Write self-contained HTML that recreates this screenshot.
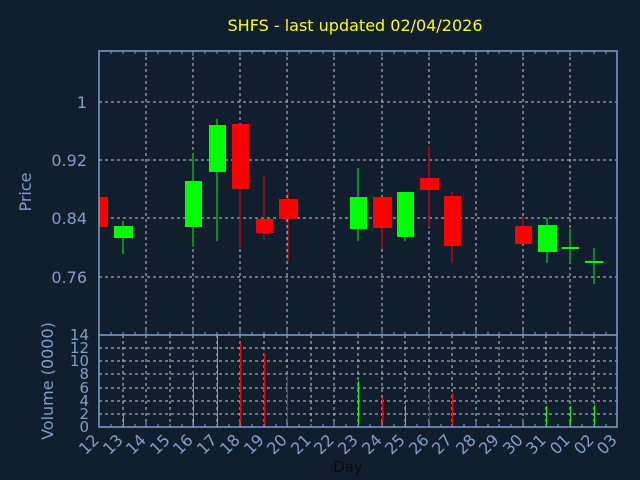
<!DOCTYPE html>
<html><head><meta charset="utf-8"><style>
html,body{margin:0;padding:0;background:#111e2e;}
svg{display:block}
text{font-family:"DejaVu Sans","Liberation Sans",sans-serif;}
</style></head><body>
<svg width="640" height="480" viewBox="0 0 640 480" xmlns="http://www.w3.org/2000/svg">
<rect width="640" height="480" fill="#111e2e"/>
<text x="355" y="31" fill="#ffff00" font-size="16" text-anchor="middle">SHFS - last updated 02/04/2026</text>
<g stroke="#c8c8c8" stroke-width="1" stroke-dasharray="3,3">
<line x1="99" y1="102" x2="617" y2="102"/>
<line x1="99" y1="160" x2="617" y2="160"/>
<line x1="99" y1="218" x2="617" y2="218"/>
<line x1="99" y1="277" x2="617" y2="277"/>
<line x1="146" y1="51" x2="146" y2="335"/>
<line x1="193" y1="51" x2="193" y2="335"/>
<line x1="240" y1="51" x2="240" y2="335"/>
<line x1="287" y1="51" x2="287" y2="335"/>
<line x1="334" y1="51" x2="334" y2="335"/>
<line x1="382" y1="51" x2="382" y2="335"/>
<line x1="429" y1="51" x2="429" y2="335"/>
<line x1="476" y1="51" x2="476" y2="335"/>
<line x1="523" y1="51" x2="523" y2="335"/>
<line x1="570" y1="51" x2="570" y2="335"/>
<line x1="99" y1="348" x2="617" y2="348"/>
<line x1="99" y1="361" x2="617" y2="361"/>
<line x1="99" y1="374" x2="617" y2="374"/>
<line x1="99" y1="388" x2="617" y2="388"/>
<line x1="99" y1="401" x2="617" y2="401"/>
<line x1="99" y1="414" x2="617" y2="414"/>
<line x1="123" y1="335" x2="123" y2="427"/><line x1="146" y1="335" x2="146" y2="427"/>
<line x1="170" y1="335" x2="170" y2="427"/><line x1="193" y1="335" x2="193" y2="427"/>
<line x1="217" y1="335" x2="217" y2="427"/><line x1="240" y1="335" x2="240" y2="427"/>
<line x1="264" y1="335" x2="264" y2="427"/><line x1="287" y1="335" x2="287" y2="427"/>
<line x1="311" y1="335" x2="311" y2="427"/><line x1="334" y1="335" x2="334" y2="427"/>
<line x1="358" y1="335" x2="358" y2="427"/><line x1="382" y1="335" x2="382" y2="427"/>
<line x1="405" y1="335" x2="405" y2="427"/><line x1="429" y1="335" x2="429" y2="427"/>
<line x1="452" y1="335" x2="452" y2="427"/><line x1="476" y1="335" x2="476" y2="427"/>
<line x1="499" y1="335" x2="499" y2="427"/><line x1="523" y1="335" x2="523" y2="427"/>
<line x1="546" y1="335" x2="546" y2="427"/><line x1="570" y1="335" x2="570" y2="427"/>
<line x1="594" y1="335" x2="594" y2="427"/>
</g>
<g stroke-width="1">
<rect x="99" y="197" width="9" height="30" fill="#ff0000"/>
<line x1="123" y1="221" x2="123" y2="254" stroke="#00ff00"/><rect x="114" y="226" width="19" height="12" fill="#00ff00"/>
<line x1="193" y1="153" x2="193" y2="247" stroke="#00ff00"/><rect x="185" y="181" width="17" height="46" fill="#00ff00"/>
<line x1="217" y1="119" x2="217" y2="241" stroke="#00ff00"/><rect x="209" y="125" width="17" height="47" fill="#00ff00"/>
<line x1="240" y1="124" x2="240" y2="248" stroke="#ff0000"/><rect x="232" y="124" width="17" height="65" fill="#ff0000"/>
<line x1="264" y1="175" x2="264" y2="241" stroke="#ff0000"/><rect x="256" y="219" width="17" height="14" fill="#ff0000"/>
<line x1="288" y1="192" x2="288" y2="261" stroke="#ff0000"/><rect x="279" y="199" width="19" height="20" fill="#ff0000"/>
<line x1="358" y1="168" x2="358" y2="241" stroke="#00ff00"/><rect x="350" y="197" width="17" height="32" fill="#00ff00"/>
<line x1="382" y1="197" x2="382" y2="249" stroke="#ff0000"/><rect x="373" y="197" width="19" height="31" fill="#ff0000"/>
<line x1="405" y1="192" x2="405" y2="241" stroke="#00ff00"/><rect x="397" y="192" width="17" height="45" fill="#00ff00"/>
<line x1="429" y1="146" x2="429" y2="227" stroke="#ff0000"/><rect x="420" y="178" width="19" height="12" fill="#ff0000"/>
<line x1="452" y1="192" x2="452" y2="263" stroke="#ff0000"/><rect x="444" y="196" width="17" height="50" fill="#ff0000"/>
<line x1="523" y1="216" x2="523" y2="244" stroke="#ff0000"/><rect x="515" y="226" width="17" height="18" fill="#ff0000"/>
<line x1="547" y1="218" x2="547" y2="263" stroke="#00ff00"/><rect x="538" y="225" width="19" height="27" fill="#00ff00"/>
<line x1="570" y1="229" x2="570" y2="263" stroke="#00ff00"/><rect x="562" y="247" width="17" height="2" fill="#00ff00"/>
<line x1="594" y1="248" x2="594" y2="284" stroke="#00ff00"/><rect x="585" y="261" width="18" height="2" fill="#00ff00"/>
</g>
<g stroke-width="1">
<line x1="123.5" y1="413" x2="123.5" y2="427" stroke="#00ff00"/>
<line x1="193.5" y1="374" x2="193.5" y2="427" stroke="#00ff00"/>
<line x1="217.5" y1="335" x2="217.5" y2="427" stroke="#00ff00"/>
<line x1="240.5" y1="343" x2="240.5" y2="427" stroke="#ff0000"/>
<line x1="264.5" y1="353" x2="264.5" y2="427" stroke="#ff0000"/>
<line x1="287.5" y1="374" x2="287.5" y2="427" stroke="#ff0000"/>
<line x1="358.5" y1="381" x2="358.5" y2="427" stroke="#00ff00"/>
<line x1="382.5" y1="398" x2="382.5" y2="427" stroke="#ff0000"/>
<line x1="405.5" y1="405" x2="405.5" y2="427" stroke="#00ff00"/>
<line x1="429.5" y1="391" x2="429.5" y2="427" stroke="#ff0000"/>
<line x1="452.5" y1="393" x2="452.5" y2="427" stroke="#ff0000"/>
<line x1="523.5" y1="418" x2="523.5" y2="427" stroke="#ff0000"/>
<line x1="546.5" y1="406" x2="546.5" y2="427" stroke="#00ff00"/>
<line x1="570.5" y1="406" x2="570.5" y2="427" stroke="#00ff00"/>
<line x1="594.5" y1="405" x2="594.5" y2="427" stroke="#00ff00"/>
</g>
<g stroke="#7f9fcf" stroke-width="1.5" fill="none">
<rect x="99" y="51" width="518" height="376"/>
<line x1="99" y1="335" x2="617" y2="335"/>
<path d="M111 51v3M123 51v3M135 51v3M146 51v5M158 51v3M170 51v3M182 51v3M193 51v5M205 51v3M217 51v3M229 51v3M240 51v5M252 51v3M264 51v3M276 51v3M287 51v5M299 51v3M311 51v3M323 51v3M334 51v5M346 51v3M358 51v3M370 51v3M382 51v5M394 51v3M405 51v3M417 51v3M429 51v5M441 51v3M452 51v3M464 51v3M476 51v5M488 51v3M499 51v3M511 51v3M523 51v5M535 51v3M546 51v3M558 51v3M570 51v5M582 51v3M594 51v3M606 51v3" stroke-width="1"/>
<path d="M111 427v-3M123 427v-3M135 427v-3M146 427v-5M158 427v-3M170 427v-3M182 427v-3M193 427v-5M205 427v-3M217 427v-3M229 427v-3M240 427v-5M252 427v-3M264 427v-3M276 427v-3M287 427v-5M299 427v-3M311 427v-3M323 427v-3M334 427v-5M346 427v-3M358 427v-3M370 427v-3M382 427v-5M394 427v-3M405 427v-3M417 427v-3M429 427v-5M441 427v-3M452 427v-3M464 427v-3M476 427v-5M488 427v-3M499 427v-3M511 427v-3M523 427v-5M535 427v-3M546 427v-3M558 427v-3M570 427v-5M582 427v-3M594 427v-3M606 427v-3" stroke-width="1"/>
<path d="M111 335v-3M123 335v-3M135 335v-3M146 335v-5M158 335v-3M170 335v-3M182 335v-3M193 335v-5M205 335v-3M217 335v-3M229 335v-3M240 335v-5M252 335v-3M264 335v-3M276 335v-3M287 335v-5M299 335v-3M311 335v-3M323 335v-3M334 335v-5M346 335v-3M358 335v-3M370 335v-3M382 335v-5M394 335v-3M405 335v-3M417 335v-3M429 335v-5M441 335v-3M452 335v-3M464 335v-3M476 335v-5M488 335v-3M499 335v-3M511 335v-3M523 335v-5M535 335v-3M546 335v-3M558 335v-3M570 335v-5M582 335v-3M594 335v-3M606 335v-3" stroke-width="1"/>
</g>
<g fill="#7f9fcf" font-size="16" text-anchor="end">
<text x="87" y="108">1</text>
<text x="87" y="166">0.92</text>
<text x="87" y="224">0.84</text>
<text x="87" y="283">0.76</text>
</g>
<g fill="#7f9fcf" font-size="15" text-anchor="end">
<text x="89" y="340">14</text><text x="89" y="353">12</text><text x="89" y="366">10</text>
<text x="89" y="379">8</text><text x="89" y="393">6</text><text x="89" y="406">4</text>
<text x="89" y="419">2</text><text x="89" y="432">0</text>
</g>
<text transform="translate(31,192) rotate(-90)" fill="#7f9fcf" font-size="16" text-anchor="middle">Price</text>
<text transform="translate(53,381) rotate(-90)" fill="#7f9fcf" font-size="16" text-anchor="middle">Volume (0000)</text>
<g fill="#7f9fcf" font-size="16">
<text transform="translate(100,441) rotate(-45)" text-anchor="end">12</text>
<text transform="translate(124,441) rotate(-45)" text-anchor="end">13</text>
<text transform="translate(147,441) rotate(-45)" text-anchor="end">14</text>
<text transform="translate(171,441) rotate(-45)" text-anchor="end">15</text>
<text transform="translate(194,441) rotate(-45)" text-anchor="end">16</text>
<text transform="translate(218,441) rotate(-45)" text-anchor="end">17</text>
<text transform="translate(241,441) rotate(-45)" text-anchor="end">18</text>
<text transform="translate(265,441) rotate(-45)" text-anchor="end">19</text>
<text transform="translate(288,441) rotate(-45)" text-anchor="end">20</text>
<text transform="translate(312,441) rotate(-45)" text-anchor="end">21</text>
<text transform="translate(335,441) rotate(-45)" text-anchor="end">22</text>
<text transform="translate(359,441) rotate(-45)" text-anchor="end">23</text>
<text transform="translate(383,441) rotate(-45)" text-anchor="end">24</text>
<text transform="translate(406,441) rotate(-45)" text-anchor="end">25</text>
<text transform="translate(430,441) rotate(-45)" text-anchor="end">26</text>
<text transform="translate(453,441) rotate(-45)" text-anchor="end">27</text>
<text transform="translate(477,441) rotate(-45)" text-anchor="end">28</text>
<text transform="translate(500,441) rotate(-45)" text-anchor="end">29</text>
<text transform="translate(524,441) rotate(-45)" text-anchor="end">30</text>
<text transform="translate(547,441) rotate(-45)" text-anchor="end">31</text>
<text transform="translate(571,441) rotate(-45)" text-anchor="end">01</text>
<text transform="translate(595,441) rotate(-45)" text-anchor="end">02</text>
<text transform="translate(618,441) rotate(-45)" text-anchor="end">03</text>
</g>
<text x="348" y="472" fill="#0a0a0a" font-size="15" text-anchor="middle">Day</text>
</svg>
</body></html>
